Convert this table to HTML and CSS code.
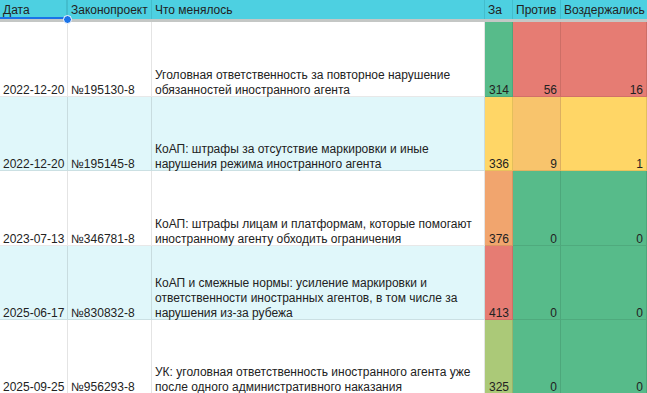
FILE: index.html
```html
<!DOCTYPE html>
<html lang="ru">
<head>
<meta charset="utf-8">
<link rel="stylesheet" href="styles.css">
</head>
<body>
<div class="sheet">
  <div class="row head">
    <div class="cell sel"><span class="t">Дата</span><span class="handle"></span></div>
    <div class="cell"><span class="t">Законопроект</span></div>
    <div class="cell"><span class="t">Что менялось</span></div>
    <div class="cell"><span class="t">За</span></div>
    <div class="cell"><span class="t">Против</span></div>
    <div class="cell"><span class="t">Воздержались</span></div>
  </div>
  <div class="freeze"></div>
  <div class="row body r75">
    <div class="cell"><span class="t">2022-12-20</span></div>
    <div class="cell"><span class="t">№195130-8</span></div>
    <div class="cell"><span class="t">Уголовная ответственность за повторное нарушение<br>обязанностей иностранного агента</span></div>
    <div class="cell num c-green"><span class="t">314</span></div>
    <div class="cell num c-red"><span class="t">56</span></div>
    <div class="cell num c-red"><span class="t">16</span></div>
  </div>
  <div class="row body alt r74">
    <div class="cell"><span class="t">2022-12-20</span></div>
    <div class="cell"><span class="t">№195145-8</span></div>
    <div class="cell"><span class="t">КоАП: штрафы за отсутствие маркировки и иные<br>нарушения режима иностранного агента</span></div>
    <div class="cell num c-yellow"><span class="t">336</span></div>
    <div class="cell num c-amber"><span class="t">9</span></div>
    <div class="cell num c-yellow"><span class="t">1</span></div>
  </div>
  <div class="row body r75">
    <div class="cell"><span class="t">2023-07-13</span></div>
    <div class="cell"><span class="t">№346781-8</span></div>
    <div class="cell"><span class="t">КоАП: штрафы лицам и платформам, которые помогают<br>иностранному агенту обходить ограничения</span></div>
    <div class="cell num c-orange"><span class="t">376</span></div>
    <div class="cell num c-green"><span class="t">0</span></div>
    <div class="cell num c-green"><span class="t">0</span></div>
  </div>
  <div class="row body alt r74">
    <div class="cell"><span class="t">2025-06-17</span></div>
    <div class="cell"><span class="t">№830832-8</span></div>
    <div class="cell"><span class="t">КоАП и смежные нормы: усиление маркировки и<br>ответственности иностранных агентов, в том числе за<br>нарушения из-за рубежа</span></div>
    <div class="cell num c-red"><span class="t">413</span></div>
    <div class="cell num c-green"><span class="t">0</span></div>
    <div class="cell num c-green"><span class="t">0</span></div>
  </div>
  <div class="row body r74">
    <div class="cell"><span class="t">2025-09-25</span></div>
    <div class="cell"><span class="t">№956293-8</span></div>
    <div class="cell"><span class="t">УК: уголовная ответственность иностранного агента уже<br>после одного административного наказания</span></div>
    <div class="cell num c-lime"><span class="t">325</span></div>
    <div class="cell num c-green"><span class="t">0</span></div>
    <div class="cell num c-green"><span class="t">0</span></div>
  </div>
</div>
</body>
</html>
```

FILE: styles.css
```css
html, body {
  margin: 0;
  padding: 0;
  background: #ffffff;
}
body {
  font-family: "Liberation Sans", Arial, sans-serif;
  font-size: 12px;
  color: #222222;
  width: 647px;
  height: 393px;
  overflow: hidden;
}
.sheet {
  display: flex;
  flex-direction: column;
}
.row {
  display: grid;
  grid-template-columns: 68px 84px 333px 28px 48px 1fr;
}
.cell {
  box-sizing: border-box;
  border-right: 1px solid rgba(0, 0, 0, 0.1);
  border-bottom: 1px solid rgba(0, 0, 0, 0.09);
  padding: 0 3px 0 3px;
  line-height: 15px;
  display: flex;
  align-items: flex-end;
  white-space: nowrap;
  position: relative;
}
.t {
  display: block;
  margin-bottom: -2px;
}
.head {
  height: 19px;
  background: #4dd0e1;
}
.head .cell {
  border-bottom: none;
  border-right-color: rgba(0, 60, 80, 0.13);
  padding-bottom: 1px;
}
.head .t {
  margin-bottom: 0;
}
.freeze {
  height: 3px;
  background: #c4c7c5;
}
.r75 { height: 75px; }
.r74 { height: 74px; }
.alt { background: #e0f7fa; }
.num {
  justify-content: flex-end;
}
.c-green { background: #57bb8a; }
.c-red { background: #e67c73; }
.c-yellow { background: #ffd666; }
.c-amber { background: #f8c46c; }
.c-orange { background: #f1a56e; }
.c-lime { background: #abc978; }
.sel {
  border-right: 2px solid #1a73e8;
  box-shadow: inset 0 -2px 0 #1a73e8;
}
.handle {
  position: absolute;
  right: -6px;
  bottom: -5px;
  width: 7px;
  height: 7px;
  border-radius: 50%;
  background: #1a73e8;
  border: 1px solid #ffffff;
  z-index: 2;
}
```
